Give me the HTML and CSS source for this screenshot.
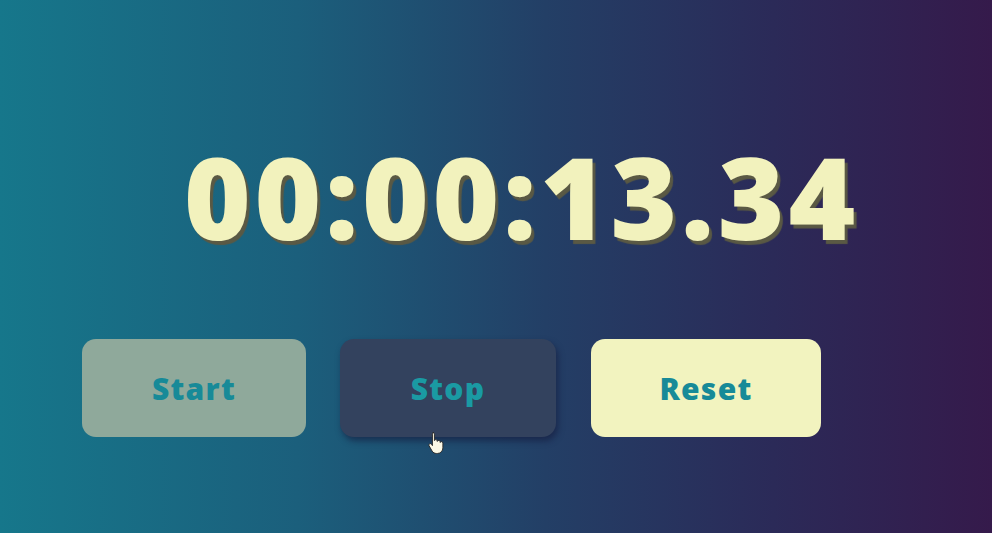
FILE: index.html
```html
<!DOCTYPE html>
<html>
<head>
<meta charset="utf-8">
<link rel="stylesheet" href="styles.css">
</head>
<body>
<main class="page">
  <div class="timer">00:00:13.34</div>
  <div class="controls">
    <button class="btn btn-start">Start</button>
    <button class="btn btn-stop">Stop
      <svg class="cursor" width="17" height="23" viewBox="0 0 16 22">
        <path d="M4.5 1.5c.9 0 1.5.6 1.5 1.5v6.2c.2-.6.8-1 1.4-1 .8 0 1.4.6 1.4 1.4v.4c.2-.6.8-1 1.4-1 .8 0 1.4.6 1.4 1.4v.6c.2-.5.7-.8 1.2-.8.8 0 1.3.6 1.3 1.4v4.5c0 3-2.2 5.4-5.2 5.4H8c-1.8 0-3.2-.8-4.2-2.3L1 14.3c-.5-.7-.3-1.6.4-2 .6-.4 1.4-.2 1.8.4l.9 1.3V3c0-.9.5-1.5 1.4-1.5z" fill="#fbf8e6" stroke="#2a2a2a" stroke-width="0.9"/>
      </svg>
    </button>
    <button class="btn btn-reset">Reset</button>
  </div>
</main>
</body>
</html>
```
FILE: styles.css
```css
* { box-sizing: border-box; }
html, body {
  margin: 0;
  height: 100%;
}
body {
  background: linear-gradient(90deg, #16778b 0%, #1b5f7c 30%, #233f66 55%, #2b2a58 78%, #351a4b 100%);
  font-family: "Open Sans", "Liberation Sans", sans-serif;
  overflow: hidden;
}
.page {
  display: flex;
  flex-direction: column;
  padding-top: 121px;
}
.timer {
  padding-left: 184px;
  font-size: 114px;
  font-weight: 800;
  line-height: 150px;
  color: #f2f2bd;
  text-shadow: 3px 4px 1px #5a5944;
  letter-spacing: 3.8px;
  white-space: nowrap;
}
.controls {
  display: flex;
  align-items: flex-start;
  padding-left: 82px;
  margin-top: 68px;
}
.btn {
  position: relative;
  height: 98px;
  border: none;
  border-radius: 14px;
  font-family: "Open Sans", "Liberation Sans", sans-serif;
  font-weight: 800;
  font-size: 30px;
  letter-spacing: 1.3px;
  color: #178a98;
  padding: 0;
}
.btn-start {
  width: 224px;
  background: #8fa99b;
}
.btn-stop {
  width: 216px;
  margin-left: 34px;
  background: #33425e;
  color: #1a9aa3;
  box-shadow: 2px 4px 6px rgba(20, 25, 60, 0.6);
}
.btn-reset {
  width: 230px;
  margin-left: 35px;
  background: #f2f3bf;
}
.cursor {
  position: absolute;
  left: 88px;
  top: 92px;
}
```
